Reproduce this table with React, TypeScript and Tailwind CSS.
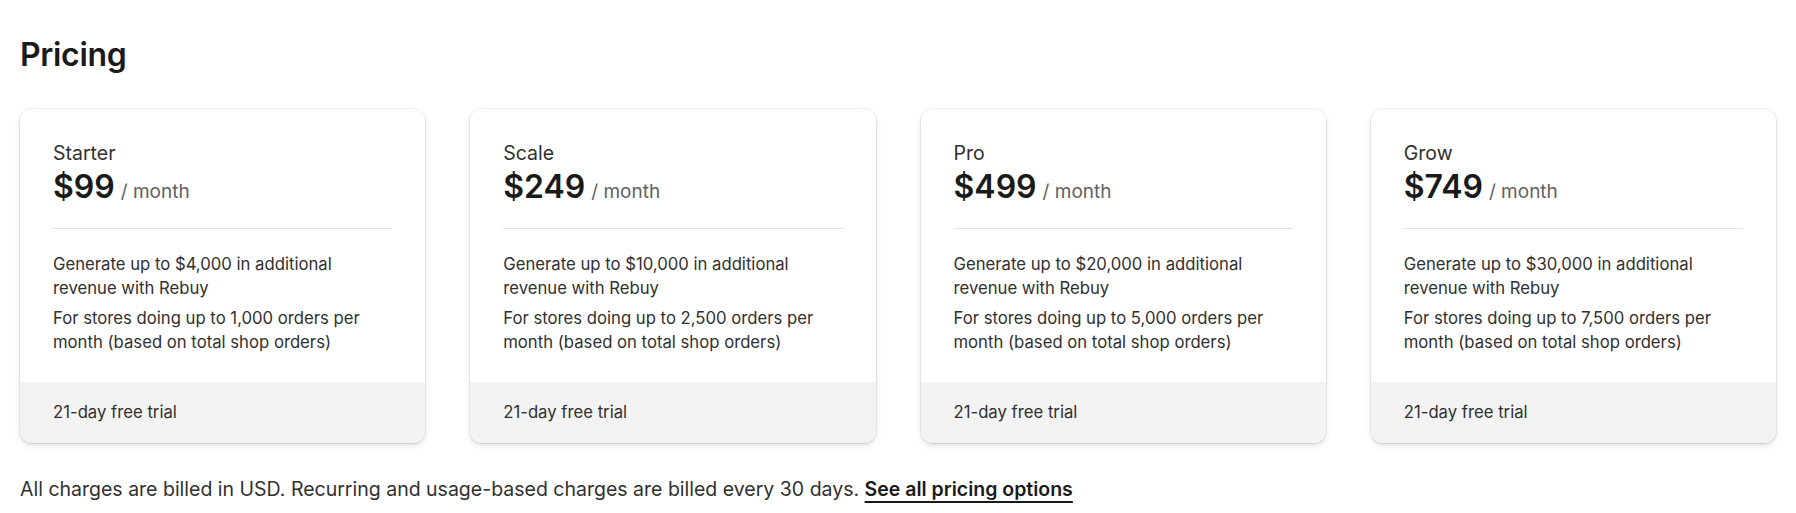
const plans = [
  { name: "Starter", price: "$99", revenue: "$4,000", orders: "1,000" },
  { name: "Scale", price: "$249", revenue: "$10,000", orders: "2,500" },
  { name: "Pro", price: "$499", revenue: "$20,000", orders: "5,000" },
  { name: "Grow", price: "$749", revenue: "$30,000", orders: "7,500" },
]

export default function App() {
  return (
    <div className="min-h-screen bg-white px-5 pt-[35px] font-['Inter',sans-serif] text-[#303030] antialiased">
      <h1 className="text-[32px] leading-10 font-semibold tracking-[-0.01em] text-[#1a1a1a]">Pricing</h1>

      <div className="mt-[34px] grid grid-cols-4 gap-[45px]">
        {plans.map((plan) => (
          <div
            key={plan.name}
            className="flex flex-col overflow-hidden rounded-xl bg-white shadow-[0_0_0_1px_rgba(0,0,0,0.04),0_1px_2px_rgba(0,0,0,0.1),0_3px_6px_rgba(0,0,0,0.1)]"
          >
            <div className="flex-1 px-[33px] pt-8 pb-7">
              <div className="text-[19.5px] leading-6 text-[#303030]">{plan.name}</div>
              <div className="mt-[2px] flex items-baseline gap-[6px]">
                <span className="text-[32px] leading-10 font-semibold text-[#1a1a1a]">{plan.price}</span>
                <span className="text-[19px] text-[#616161]">/ month</span>
              </div>
              <div className="mt-[21px] h-px bg-[#e3e3e3]" />
              <div className="mt-[23px] space-y-[6px] text-[16.7px] leading-6">
                <p>
                  Generate up to {plan.revenue} in additional
                  <br />
                  revenue with Rebuy
                </p>
                <p>
                  For stores doing up to {plan.orders} orders per
                  <br />
                  month (based on total shop orders)
                </p>
              </div>
            </div>
            <div className="flex h-[61px] items-center bg-[#f3f3f3] px-[33px] text-[16.7px] text-[#303030]">
              21-day free trial
            </div>
          </div>
        ))}
      </div>

      <p className="mt-8 text-[19.5px] leading-7 text-[#303030]">
        All charges are billed in USD. Recurring and usage-based charges are billed every 30 days.{" "}
        <a href="#" className="font-semibold text-[#1a1a1a] underline decoration-[1.5px] underline-offset-[5px]">
          See all pricing options
        </a>
      </p>
    </div>
  )
}
